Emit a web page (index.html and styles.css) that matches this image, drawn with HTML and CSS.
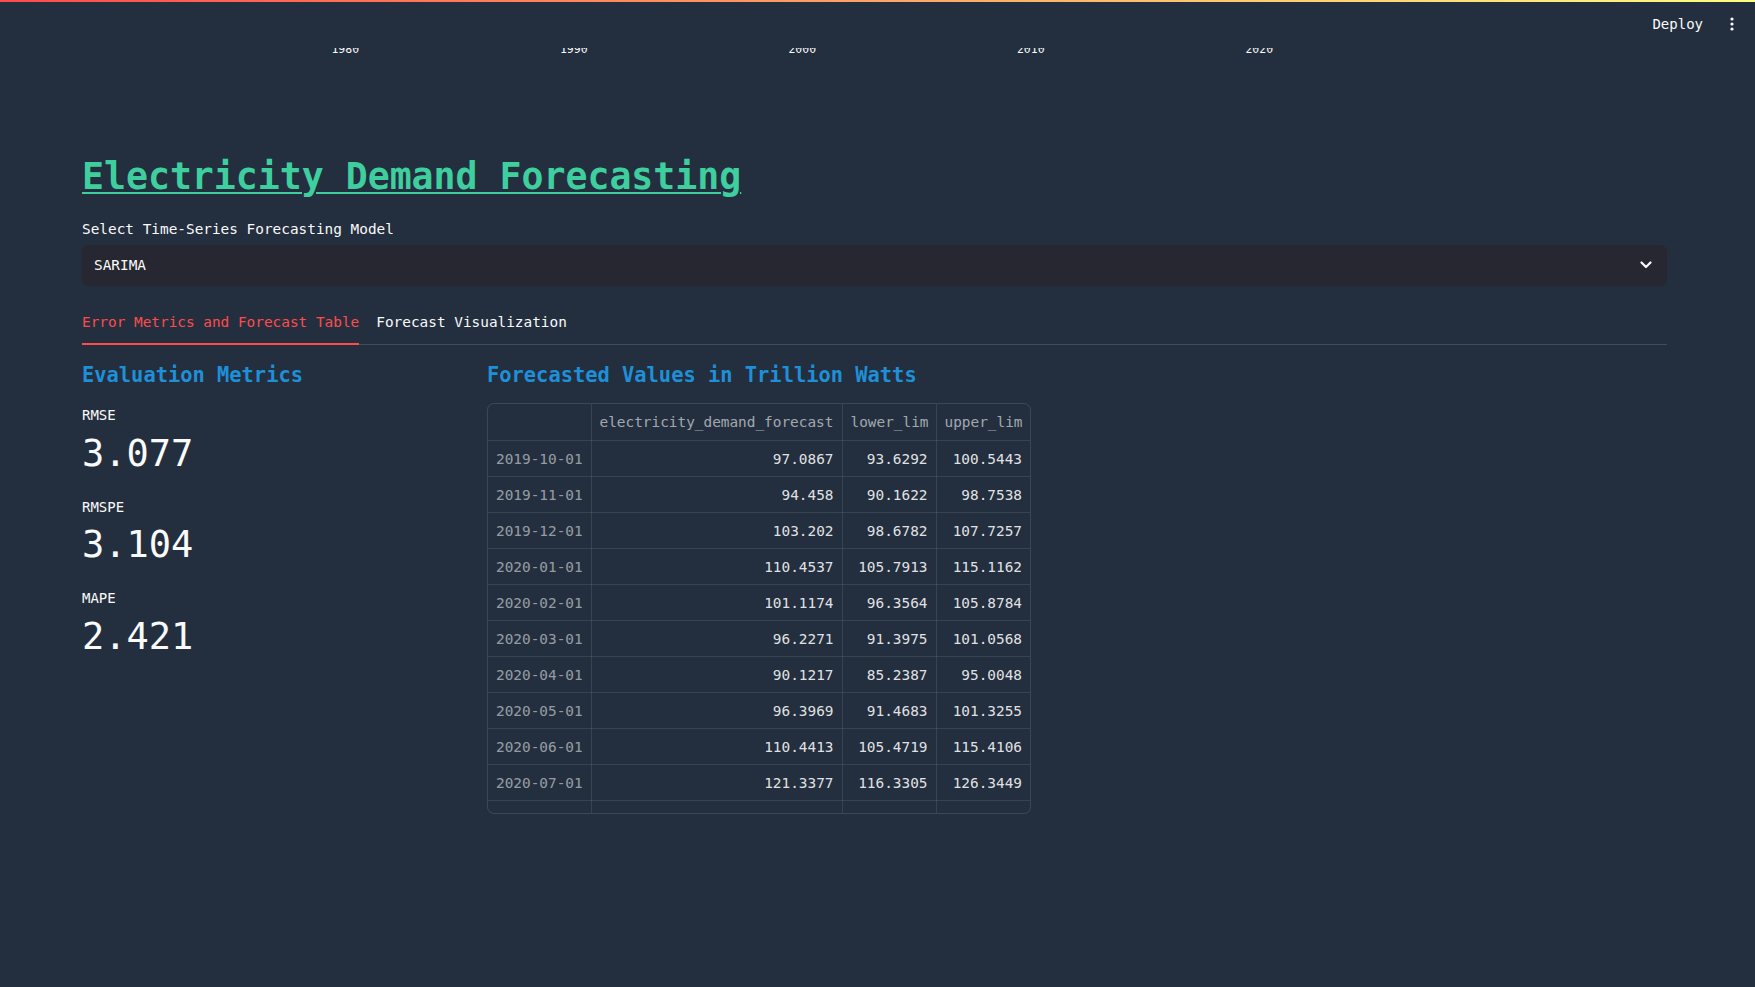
FILE: index.html
```html
<!DOCTYPE html>
<html lang="en">
<head>
<meta charset="utf-8">
<title>Electricity Demand Forecasting</title>
<link rel="stylesheet" href="styles.css">
</head>
<body>
<header class="app-header">
  <div class="decoration"></div>
  <div class="toolbar">
    <span class="deploy">Deploy</span>
    <span class="menu" aria-label="Main menu">
      <svg width="4" height="14" viewBox="0 0 4 14"><circle cx="2" cy="2" r="1.6" fill="#fafafa"/><circle cx="2" cy="7" r="1.6" fill="#fafafa"/><circle cx="2" cy="12" r="1.6" fill="#fafafa"/></svg>
    </span>
  </div>
</header>

<main class="main">
  <div class="axis">
    <span class="tick">1980</span>
    <span class="tick">1990</span>
    <span class="tick">2000</span>
    <span class="tick">2010</span>
    <span class="tick">2020</span>
  </div>

  <h1 class="title"><a href="#">Electricity Demand Forecasting</a></h1>

  <label class="field-label">Select Time-Series Forecasting Model</label>
  <div class="select">
    <span>SARIMA</span>
    <svg class="chevron" width="12" height="8" viewBox="0 0 12 8"><path d="M1.5 1.5 L6 6 L10.5 1.5" fill="none" stroke="#fafafa" stroke-width="2.2" stroke-linecap="round" stroke-linejoin="round"/></svg>
  </div>

  <div class="tabs">
    <span class="tab active">Error Metrics and Forecast Table</span>
    <span class="tab">Forecast Visualization</span>
  </div>

  <div class="columns">
    <section class="col-left">
      <h3 class="section-title">Evaluation Metrics</h3>
      <div class="metrics">
        <div class="metric">
          <div class="metric-label">RMSE</div>
          <div class="metric-value">3.077</div>
        </div>
        <div class="metric">
          <div class="metric-label">RMSPE</div>
          <div class="metric-value">3.104</div>
        </div>
        <div class="metric">
          <div class="metric-label">MAPE</div>
          <div class="metric-value">2.421</div>
        </div>
      </div>
    </section>

    <section class="col-right">
      <h3 class="section-title">Forecasted Values in Trillion Watts</h3>
      <div class="grid-wrap">
        <table class="grid">
          <colgroup>
            <col class="c-idx"><col class="c-main"><col class="c-lim"><col class="c-lim">
          </colgroup>
          <thead>
            <tr><th></th><th>electricity_demand_forecast</th><th>lower_lim</th><th>upper_lim</th></tr>
          </thead>
          <tbody>
            <tr><td>2019-10-01</td><td>97.0867</td><td>93.6292</td><td>100.5443</td></tr>
            <tr><td>2019-11-01</td><td>94.458</td><td>90.1622</td><td>98.7538</td></tr>
            <tr><td>2019-12-01</td><td>103.202</td><td>98.6782</td><td>107.7257</td></tr>
            <tr><td>2020-01-01</td><td>110.4537</td><td>105.7913</td><td>115.1162</td></tr>
            <tr><td>2020-02-01</td><td>101.1174</td><td>96.3564</td><td>105.8784</td></tr>
            <tr><td>2020-03-01</td><td>96.2271</td><td>91.3975</td><td>101.0568</td></tr>
            <tr><td>2020-04-01</td><td>90.1217</td><td>85.2387</td><td>95.0048</td></tr>
            <tr><td>2020-05-01</td><td>96.3969</td><td>91.4683</td><td>101.3255</td></tr>
            <tr><td>2020-06-01</td><td>110.4413</td><td>105.4719</td><td>115.4106</td></tr>
            <tr><td>2020-07-01</td><td>121.3377</td><td>116.3305</td><td>126.3449</td></tr>
            <tr class="partial"><td></td><td></td><td></td><td></td></tr>
          </tbody>
        </table>
      </div>
    </section>
  </div>
</main>
</body>
</html>
```

FILE: styles.css
```css
* { box-sizing: border-box; }

html, body {
  margin: 0;
  padding: 0;
  background: #232f3f;
  color: #fafafa;
  font-family: "DejaVu Sans Mono", "Liberation Mono", monospace;
  height: 100%;
  overflow: hidden;
}

.app-header {
  position: absolute;
  top: 0;
  left: 0;
  right: 0;
  height: 48px;
  background: #232f3f;
  z-index: 10;
  display: flex;
  flex-direction: column;
}

.decoration {
  height: 2px;
  background: linear-gradient(90deg, #ff4b4b, #fffd80);
}

.toolbar {
  flex: 1;
  display: flex;
  justify-content: flex-end;
  align-items: center;
  gap: 19px;
  padding: 0 13px 2px 0;
}

.deploy {
  font-size: 14px;
  color: #fafafa;
}

.menu {
  width: 20px;
  display: flex;
  justify-content: center;
  align-items: center;
}

.main {
  padding: 0 88px 0 82px;
}

.axis {
  display: flex;
  margin: 42px 0 0 149px;
  height: 14px;
}

.tick {
  width: 228.5px;
  text-align: center;
  font-size: 11.5px;
  line-height: 14px;
  color: #fafafa;
}

.title {
  margin: 99px 0 0 0;
  font-size: 36.5px;
  line-height: 44px;
  font-weight: bold;
}

.title a {
  color: #3fcf9f;
  text-decoration: underline;
  text-decoration-thickness: 2px;
  text-underline-offset: 3px;
}

.field-label {
  display: block;
  margin-top: 19.5px;
  font-size: 14.4px;
  line-height: 20px;
}

.select {
  margin-top: 6px;
  height: 41px;
  background: #262730;
  border-radius: 7px;
  display: flex;
  align-items: center;
  justify-content: space-between;
  padding: 0 15px 0 12px;
  font-size: 14.4px;
}

.chevron { display: block; }

.tabs {
  margin-top: 26px;
  display: flex;
  gap: 17px;
  border-bottom: 1px solid rgba(250, 250, 250, 0.14);
}

.tab {
  font-size: 14.4px;
  line-height: 20px;
  padding-bottom: 11px;
  border-bottom: 2px solid transparent;
  margin-bottom: -1px;
}

.tab.active {
  color: #ff4b4b;
  border-bottom-color: #ff4b4b;
}

.columns {
  margin-top: 16px;
  display: grid;
  grid-template-columns: 390px 1fr;
  gap: 15px;
}

.section-title {
  margin: 0;
  font-size: 20.4px;
  line-height: 28px;
  font-weight: bold;
  color: #1f8fd8;
}

.metrics {
  margin-top: 16.5px;
  display: flex;
  flex-direction: column;
  gap: 17px;
}

.metric-label {
  font-size: 14px;
  line-height: 21px;
}

.metric-value {
  margin-top: 1.5px;
  font-size: 37px;
  line-height: 52px;
}

.grid-wrap {
  margin-top: 14px;
  width: 544px;
  height: 411px;
  border: 1px solid rgba(250, 250, 250, 0.12);
  border-radius: 7px;
  overflow: hidden;
}

.grid {
  width: 542px;
  table-layout: fixed;
  border-collapse: collapse;
  font-size: 14.4px;
}

.c-idx { width: 103px; }
.c-main { width: 251px; }
.c-lim { width: 94px; }

.grid th,
.grid td {
  padding: 0 8px;
  border-right: 1px solid rgba(250, 250, 250, 0.1);
  border-bottom: 1px solid rgba(250, 250, 250, 0.1);
  white-space: nowrap;
  overflow: hidden;
}

.grid th:last-child,
.grid td:last-child { border-right: none; }

.grid th {
  height: 37px;
  font-weight: normal;
  color: rgba(250, 250, 250, 0.6);
  text-align: left;
}

.grid td {
  height: 36px;
  text-align: right;
  color: rgba(250, 250, 250, 0.9);
}

.grid td:first-child {
  text-align: left;
  color: rgba(250, 250, 250, 0.55);
}

.grid tr.partial td { border-bottom: none; }
```
